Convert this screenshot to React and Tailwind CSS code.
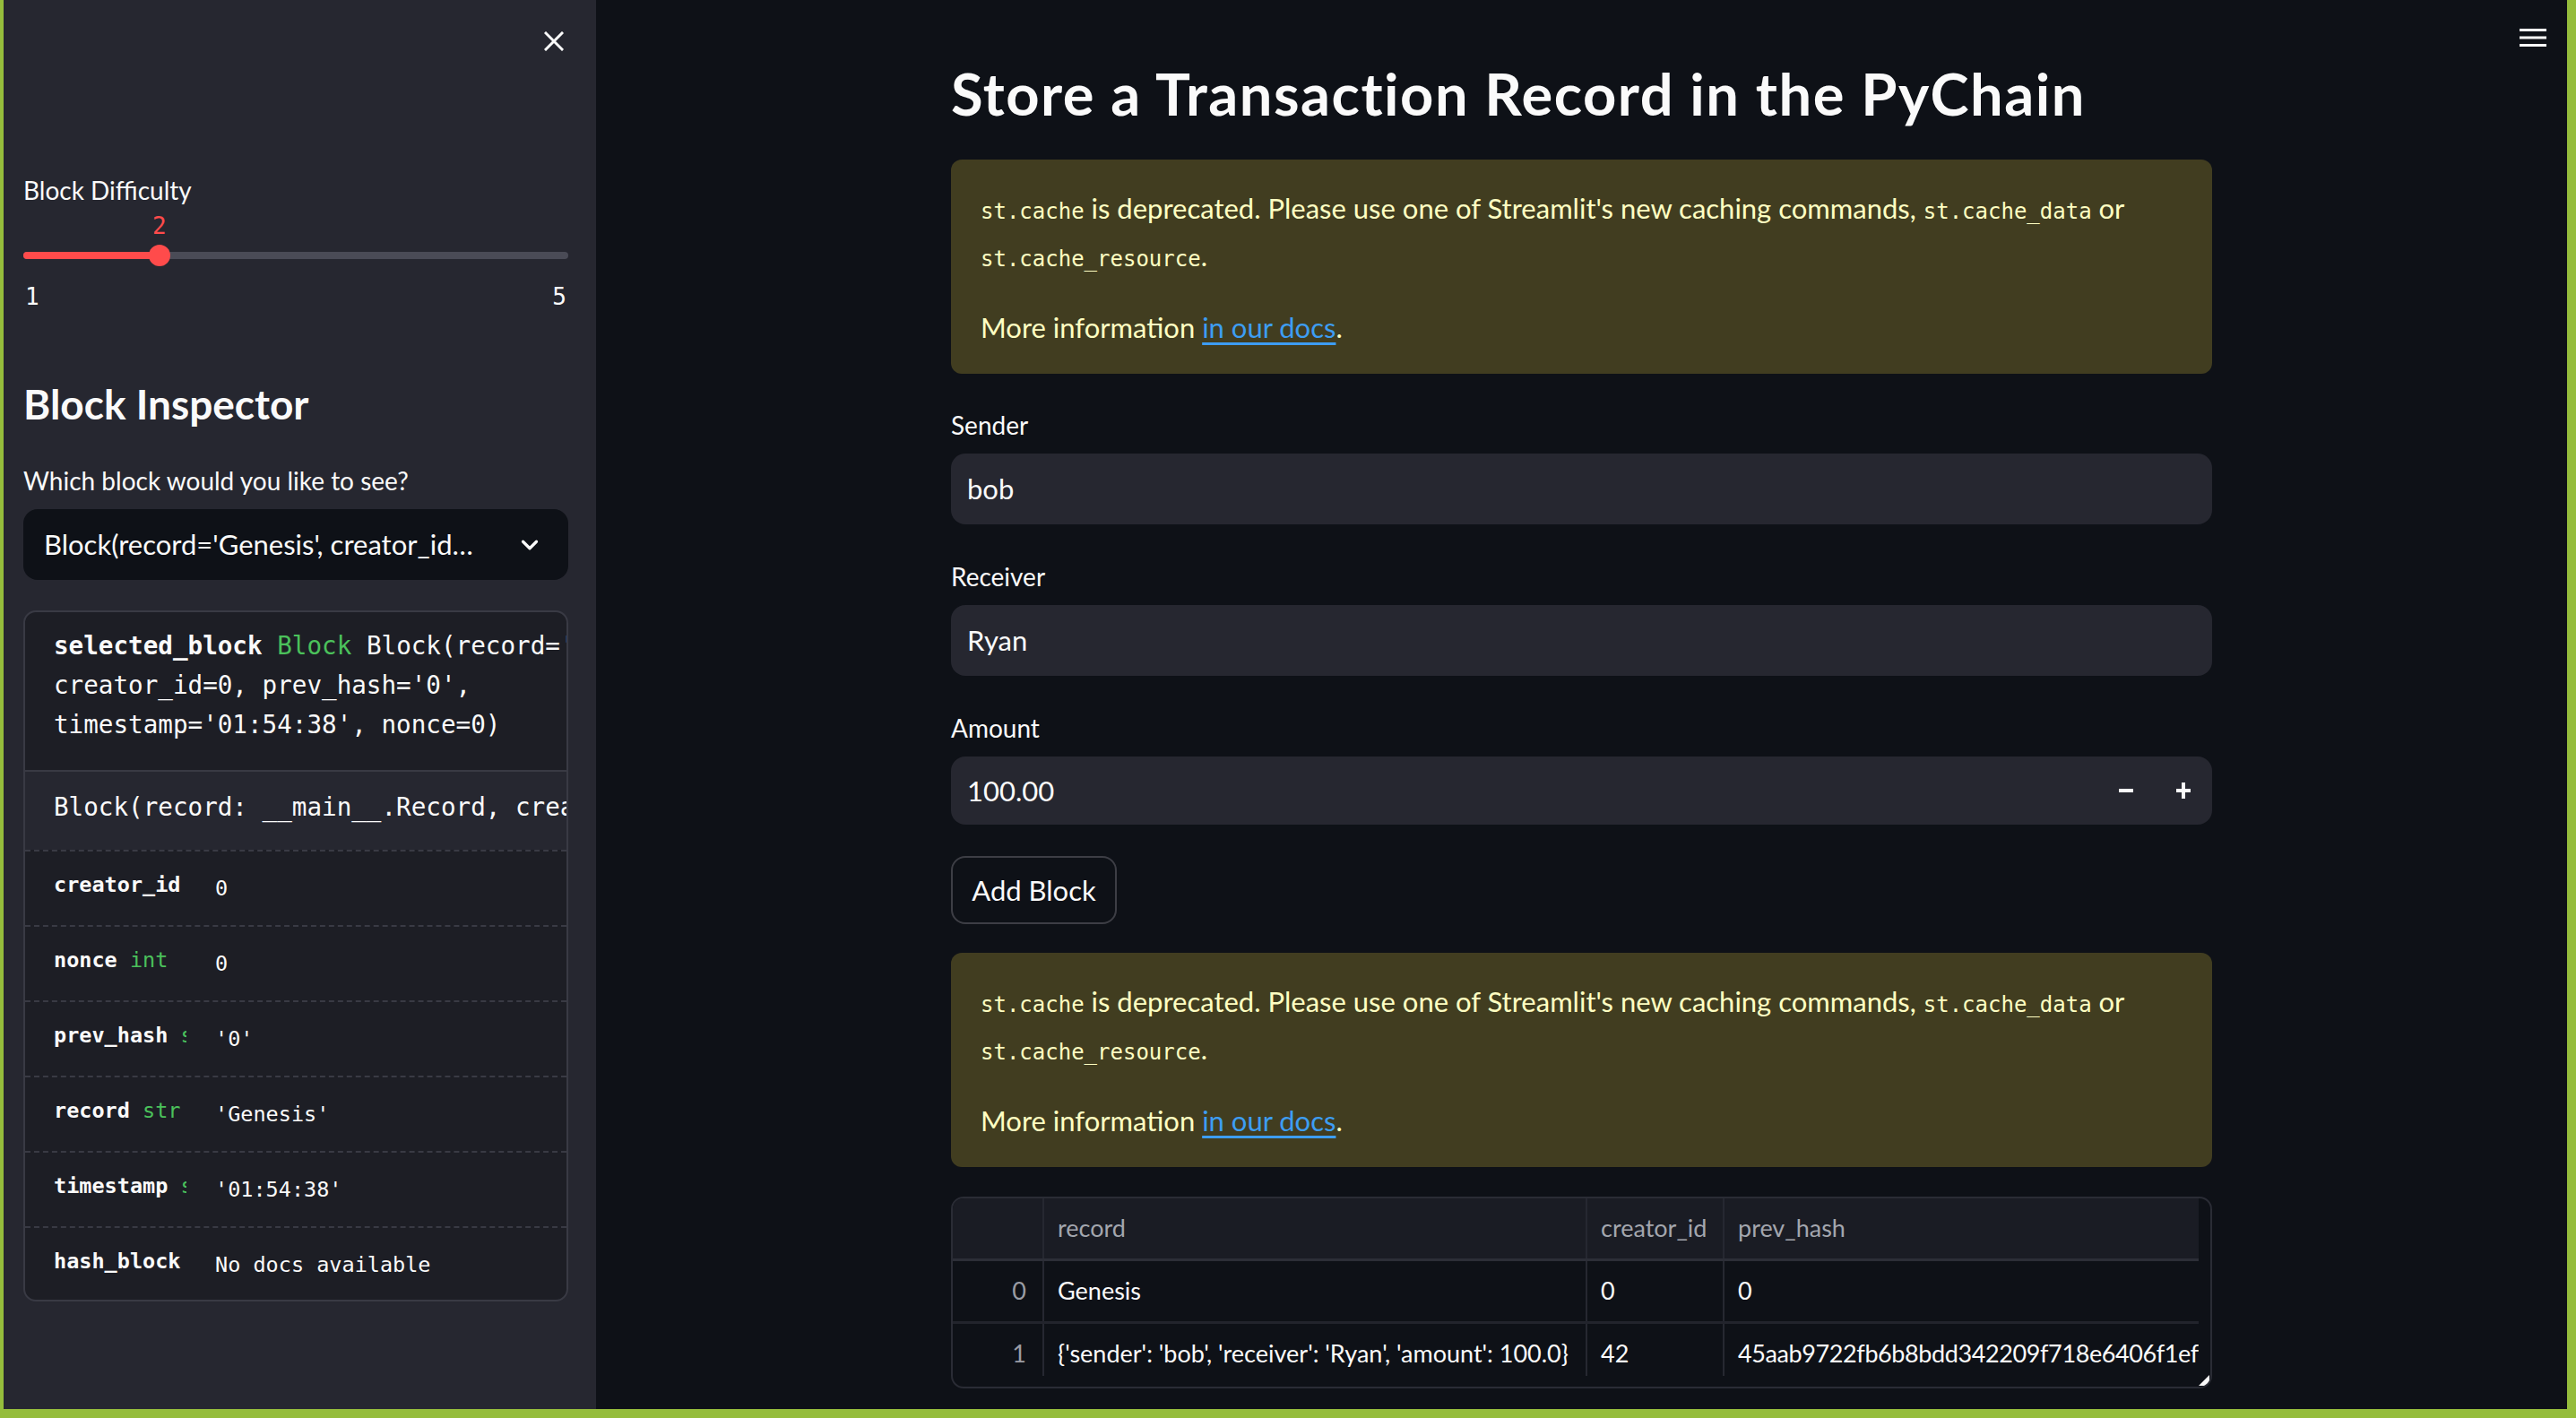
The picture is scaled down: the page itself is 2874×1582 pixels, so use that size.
import React from "react";
import { ChevronDown } from "lucide-react";

const WARN_TEXT = "text-[#ffffc2]";

function CloseIcon() {
  return (
    <svg width="22" height="22" viewBox="0 0 22 22" fill="none" stroke="#fafafa" strokeWidth="3" strokeLinecap="square">
      <path d="M2 2 20 20M20 2 2 20" />
    </svg>
  );
}

function Slider() {
  return (
    <div className="flex flex-col">
      <div className="h-[36px] pl-[144px] pt-[2px] font-['DejaVu_Sans_Mono',monospace] text-[26px] leading-[36px] text-[#ff4b4b]">2</div>
      <div className="relative mt-[13px] h-[8px] rounded-full bg-[#4a4b56]">
        <div className="h-full w-[152px] rounded-full bg-[#ff4b4b]" />
        <div className="absolute left-[140px] top-[-8px] h-[24px] w-[24px] rounded-full bg-[#ff4b4b]" />
      </div>
      <div className="mt-[24px] flex h-[36px] justify-between px-[2px] font-['DejaVu_Sans_Mono',monospace] text-[26px] leading-[36px]">
        <span>1</span>
        <span>5</span>
      </div>
    </div>
  );
}

const fields = [
  { name: "creator_id", type: "int", value: "0" },
  { name: "nonce", type: "int", value: "0" },
  { name: "prev_hash", type: "str", value: "'0'" },
  { name: "record", type: "str", value: "'Genesis'" },
  { name: "timestamp", type: "str", value: "'01:54:38'" },
  { name: "hash_block", type: "", value: "No docs available" },
];

function Inspector() {
  return (
    <div className="mt-[34px] flex h-[771px] flex-col overflow-hidden rounded-[14px] border-[2px] border-[#393a44] bg-[#1d1e25] font-['DejaVu_Sans_Mono',monospace]">
      <div className="h-[176px] shrink-0 whitespace-nowrap pl-[32px] pt-[16px] text-[27.6px] leading-[44px]">
        <div>
          <span className="font-bold">selected_block</span> <span className="text-[#4bc15b]">Block</span> Block(record='Genesis',
        </div>
        <div>creator_id=0, prev_hash='0',</div>
        <div>timestamp='01:54:38', nonce=0)</div>
      </div>
      <div className="flex h-[89px] shrink-0 items-center whitespace-nowrap border-t-[2px] border-[#393a44] bg-[#262730] pb-[8px] pl-[32px] text-[27.6px]">
        Block(record: __main__.Record, creator_id: int, prev_hash: str = '0', timestamp: str)
      </div>
      {fields.map((f) => (
        <div key={f.name} className="flex h-[84px] shrink-0 items-center border-t-[2px] border-dashed border-[#393a44] pb-[6px] text-[23.5px]">
          <div className="ml-[32px] w-[148px] shrink-0 overflow-hidden whitespace-nowrap">
            <span className="font-bold">{f.name}</span> <span className="text-[#4bc15b]">{f.type}</span>
          </div>
          <div className="ml-[32px] whitespace-nowrap pt-[8px]">{f.value}</div>
        </div>
      ))}
    </div>
  );
}

function Sidebar() {
  return (
    <aside className="relative flex h-full w-[661px] shrink-0 flex-col bg-[#262730] pl-[22px] pr-[31px]">
      <button className="absolute right-[36px] top-[35px]">
        <CloseIcon />
      </button>
      <div className="mt-[192px] h-[40px] text-[28px] leading-[40px]">Block Difficulty</div>
      <Slider />
      <h2 className="mt-[72px] h-[60px] text-[46px] font-bold leading-[60px]">Block Inspector</h2>
      <div className="mt-[35px] h-[40px] text-[28px] leading-[40px]">Which block would you like to see?</div>
      <div className="mt-[12px] flex h-[79px] items-center justify-between rounded-[16px] bg-[#0e1117] pl-[23px] pr-[28px]">
        <span className="w-[492px] truncate text-[31px]">Block(record='Genesis', creator_id=0, prev_hash='0', timestamp='01:54:38', nonce=0)</span>
        <ChevronDown size={30} strokeWidth={2.6} />
      </div>
      <Inspector />
    </aside>
  );
}

function Code({ children }) {
  return <code className="font-['DejaVu_Sans_Mono',monospace] text-[24px]">{children}</code>;
}

function Warning({ className = "" }) {
  return (
    <div className={`h-[239px] rounded-[12px] bg-[#413d20] pl-[33px] pr-[24px] pt-[30px] text-[31px] leading-[49px] ${WARN_TEXT} ${className}`}>
      <div className="whitespace-nowrap">
        <Code>st.cache</Code> is deprecated. Please use one of Streamlit's new caching commands, <Code>st.cache_data</Code> or
      </div>
      <div>
        <Code>st.cache_resource</Code>.
      </div>
      <div className="mt-[27px]">
        More information <a className="text-[#3d9df3] underline underline-offset-[5px]">in our docs</a>.
      </div>
    </div>
  );
}

function Field({ label, value, top, height = "h-[79px]" }) {
  return (
    <div className="flex flex-col">
      <div className={`h-[40px] text-[28px] leading-[40px] ${top}`}>{label}</div>
      <div className={`mt-[12px] flex items-center rounded-[16px] bg-[#262730] pl-[18px] text-[31px] ${height}`}>{value}</div>
    </div>
  );
}

function MinusIcon() {
  return (
    <svg width="16" height="16" viewBox="0 0 16 16" stroke="#fafafa" strokeWidth="4">
      <path d="M0 8H16" />
    </svg>
  );
}

function PlusIcon() {
  return (
    <svg width="16" height="18" viewBox="0 0 16 18" stroke="#fafafa" strokeWidth="4">
      <path d="M0 9H16M8 0V18" />
    </svg>
  );
}

const rows = [
  { i: "0", record: "Genesis", creator: "0", prev: "0" },
  { i: "1", record: "{'sender': 'bob', 'receiver': 'Ryan', 'amount': 100.0}", creator: "42", prev: "45aab9722fb6b8bdd342209f718e6406f1efde0c2a71" },
];

function DataTable() {
  const cell = "flex items-center overflow-hidden whitespace-nowrap border-l-[2px] border-[#262831] pl-[15px]";
  return (
    <div className="relative mt-[33px] flex h-[214px] overflow-hidden rounded-[14px] border-[2px] border-[#2a2c35] text-[27px]">
      <div className="flex w-[1390px] flex-col">
        <div className="h-[198px] overflow-hidden">
          <div className="grid h-[70px] grid-cols-[100px_606px_153px_531px] border-b-[3px] border-[#2c2e37] bg-[#1a1c24] text-[#a3a6ae]">
            <div />
            <div className={cell}>record</div>
            <div className={cell}>creator_id</div>
            <div className={cell}>prev_hash</div>
          </div>
          {rows.map((r) => (
            <div key={r.i} className="grid h-[70px] grid-cols-[100px_606px_153px_531px] border-b-[3px] border-[#22242c]">
              <div className="flex items-center justify-end pr-[18px] text-[#9a9ca4]">{r.i}</div>
              <div className={cell}>{r.record}</div>
              <div className={cell}>{r.creator}</div>
              <div className={`${cell} tracking-[-0.4px]`}>{r.prev}</div>
            </div>
          ))}
        </div>
      </div>
      <svg className="absolute bottom-[1px] right-[1px]" width="12" height="12" viewBox="0 0 12 12">
        <path d="M12 0V12H0Z" fill="#fafafa" />
      </svg>
    </div>
  );
}

function Main() {
  return (
    <main className="relative h-full flex-1 bg-[#0e1117]">
      <button className="absolute right-[23px] top-[32px]">
        <svg width="30" height="20" viewBox="0 0 30 20" stroke="#fafafa" strokeWidth="3">
          <path d="M0 1.5H30M0 10H30M0 18.5H30" />
        </svg>
      </button>
      <div className="mx-auto flex w-[1407px] flex-col pt-[60px]">
        <h1 className="h-[88px] whitespace-nowrap text-[65px] font-bold leading-[88px] tracking-[1.5px]">Store a Transaction Record in the PyChain</h1>
        <Warning className="mt-[30px]" />
        <Field label="Sender" value="bob" top="mt-[37px]" />
        <Field label="Receiver" value="Ryan" top="mt-[38px]" />
        <div className="flex flex-col">
          <div className="mt-[38px] h-[40px] text-[28px] leading-[40px]">Amount</div>
          <div className="mt-[12px] flex h-[76px] items-center rounded-[16px] bg-[#262730] pl-[18px] text-[31px]">
            <span className="flex-1">100.00</span>
            <span className="flex h-full w-[64px] items-center justify-center"><MinusIcon /></span>
            <span className="flex h-full w-[64px] items-center justify-center"><PlusIcon /></span>
          </div>
        </div>
        <button className="mt-[35px] flex h-[76px] w-[185px] items-center justify-center rounded-[16px] border-[2px] border-[#3d3e45] text-[31px]">Add Block</button>
        <Warning className="mt-[32px]" />
        <DataTable />
      </div>
    </main>
  );
}

export default function App() {
  return (
    <div className="flex h-[1582px] w-[2874px] overflow-hidden bg-[#95bd3c] pb-[10px] pl-[4px] pr-[10px] font-[Lato,sans-serif] text-[#fafafa]">
      <Sidebar />
      <Main />
    </div>
  );
}
